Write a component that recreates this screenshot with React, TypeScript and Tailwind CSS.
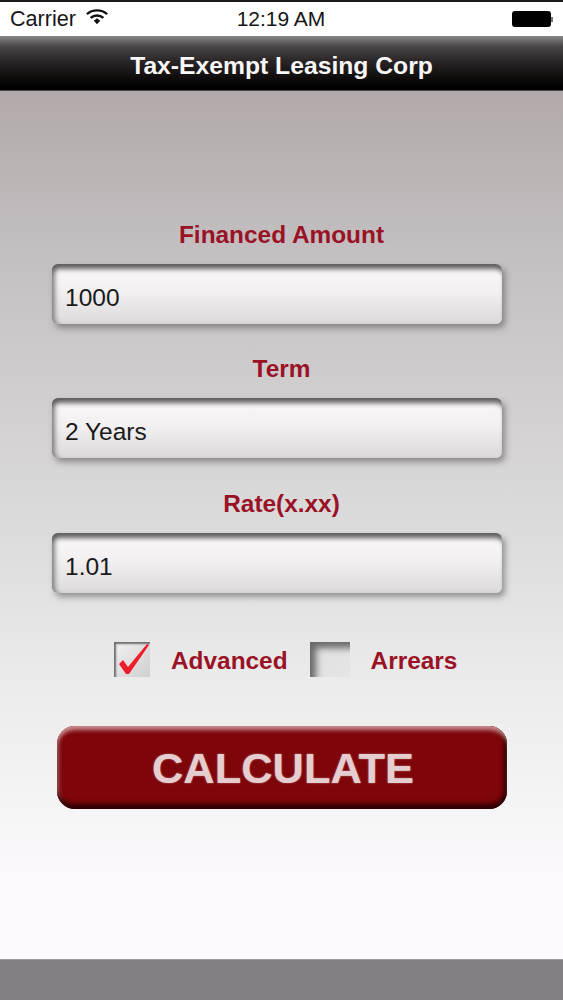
const FONT = "[font-family:'Liberation_Sans',Arial,sans-serif]";

function Field({ label, value, top }: { label: string; value: string; top: string }) {
  return (
    <div className={`flex flex-col ${top}`}>
      <div className="h-[28px] text-center text-[24.4px] leading-[30px] font-bold text-[#9a1226]">{label}</div>
      <div className="mt-[16px] ml-[52px] flex h-[60px] w-[450px] items-center rounded-[6px] bg-[linear-gradient(180deg,#fbf8f9_0%,#f3f0f1_45%,#dcd9da_100%)] pt-[8px] pl-[13px] text-[24.5px] text-[#1a1a1a] shadow-[inset_0_8px_5px_-3px_#5f5d5e,inset_6px_0_5px_-3px_#858283,3px_4px_6px_rgba(70,66,68,0.5)]">
        {value}
      </div>
    </div>
  );
}

function Wifi() {
  return (
    <svg width="22" height="17" viewBox="0 0 24 18" className="ml-[10px] mb-[5px]">
      <path d="M1 6.5C7 1 17 1 23 6.5" fill="none" stroke="#111" strokeWidth="2.6" />
      <path d="M5 10.5C9 7 15 7 19 10.5" fill="none" stroke="#111" strokeWidth="2.6" />
      <path d="M8.5 13.5 12 10.8 15.5 13.5 12 17.5Z" fill="#111" />
    </svg>
  );
}

export default function App() {
  return (
    <div className={`flex h-[1000px] w-[563px] flex-col overflow-hidden bg-white ${FONT}`}>
      <div className="relative flex h-[36px] shrink-0 items-center border-t-[2px] border-[#1c1c1c] bg-white pl-[10px] text-[#161616]">
        <span className="text-[21.6px]">Carrier</span>
        <Wifi />
        <span className="absolute left-0 right-0 text-center text-[21px] pr-[1px]">12:19 AM</span>
        <div className="ml-auto mr-[10px] flex items-center">
          <div className="h-[16px] w-[39px] rounded-[3px] bg-black" />
          <div className="h-[5px] w-[2px] bg-[#777]" />
        </div>
      </div>

      <div className="flex h-[55px] shrink-0 items-center justify-center border-b border-[#4a4647] bg-[linear-gradient(180deg,#8a8788_0%,#4d494a_18%,#2b2728_45%,#0d0a0a_80%,#000_100%)] pt-[5px] text-[24.7px] font-bold text-[#f8f6f6]">
        Tax-Exempt Leasing Corp
      </div>

      <div className="flex flex-1 flex-col bg-[linear-gradient(180deg,#b1a9aa_0%,#c5c1c2_20%,#dcdbdb_50%,#ebebeb_68%,#fbf9fb_90%,#fcfafc_100%)]">
        <Field label="Financed Amount" value="1000" top="mt-[129px]" />
        <Field label="Term" value="2 Years" top="mt-[30px]" />
        <Field label="Rate(x.xx)" value="1.01" top="mt-[31px]" />

        <div className="mt-[49px] ml-[114px] flex h-[35px] items-center text-[24.4px] font-bold text-[#9a1226]">
          <div className="relative h-[35px] w-[36px] bg-[linear-gradient(135deg,#f2f1f1,#d0cece)] shadow-[inset_2px_2px_2px_#6f6d6e]">
            <svg width="40" height="38" viewBox="0 0 40 38" className="absolute -top-[2px] left-0">
              <path d="M5 24 L9 20 L14 27 L33 4 L35 5 L15 34 L12 34Z" fill="#ef1d2c" />
            </svg>
          </div>
          <span className="ml-[21px] pt-[3px]">Advanced</span>
          <div className="ml-[22px] h-[35px] w-[40px] bg-[linear-gradient(135deg,#e0dfdf,#e6e5e5)] shadow-[inset_8px_8px_7px_-2px_#6a6869]" />
          <span className="ml-[21px] pt-[3px]">Arrears</span>
        </div>

        <button
          type="button"
          className="mt-[49px] ml-[57px] flex h-[83px] w-[450px] items-center justify-center rounded-[18px] bg-[#7e0509] pt-[3px] pl-[2px] text-[43.4px] font-bold text-[#e6cdcf] shadow-[inset_0_6px_4px_-2px_#c98d8f,inset_0_-7px_5px_-2px_#2a0103,inset_-5px_0_4px_-2px_#2a0103,inset_4px_0_4px_-2px_#a85a5d] [text-shadow:0_0_2px_#b98587]"
        >
          CALCULATE
        </button>
      </div>

      <div className="h-[41px] shrink-0 border-t border-[#9b999a] bg-[#828083]" />
    </div>
  );
}
